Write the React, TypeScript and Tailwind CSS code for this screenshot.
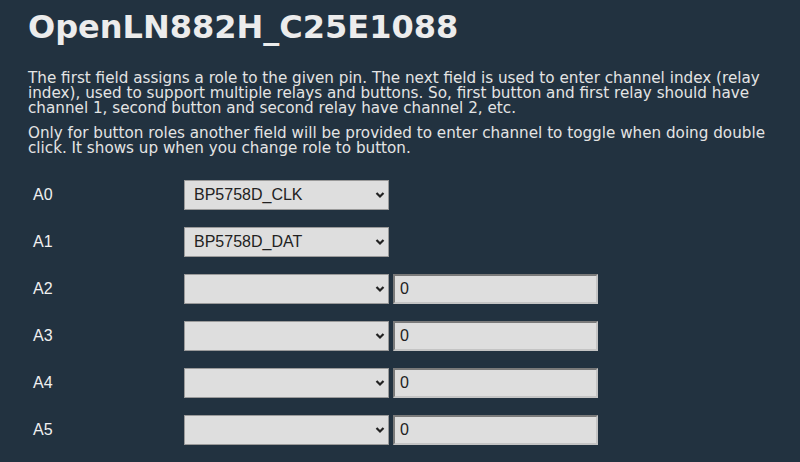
import React from "react";

type Pin = {
  name: string;
  role: string;
  channel?: string;
};

const pins: Pin[] = [
  { name: "A0", role: "BP5758D_CLK" },
  { name: "A1", role: "BP5758D_DAT" },
  { name: "A2", role: "", channel: "0" },
  { name: "A3", role: "", channel: "0" },
  { name: "A4", role: "", channel: "0" },
  { name: "A5", role: "", channel: "0" },
];

const Chevron = () => (
  <svg
    className="pointer-events-none absolute right-[4px] top-1/2 -translate-y-1/2"
    width="10"
    height="7"
    viewBox="0 0 10 7"
  >
    <path d="M1.5 1.5 L5 5 L8.5 1.5" fill="none" stroke="#222" strokeWidth="2.2" />
  </svg>
);

const PinRow: React.FC<{ pin: Pin }> = ({ pin }) => (
  <div className="flex h-[47px] items-center">
    <div className="w-[156px] pl-[5px] font-['Liberation_Sans',Arial,sans-serif] text-[16px] text-[#f0f0f0]">
      {pin.name}
    </div>
    <div className="relative">
      <select
        defaultValue={pin.role}
        className="h-[30px] w-[205px] appearance-none border border-[#9a9a9a] bg-[#dedede] pl-[9px] font-['Liberation_Sans',Arial,sans-serif] text-[16px] text-[#222] outline-none"
      >
        <option value="">{""}</option>
        <option value="BP5758D_CLK">BP5758D_CLK</option>
        <option value="BP5758D_DAT">BP5758D_DAT</option>
      </select>
      <Chevron />
    </div>
    {pin.channel !== undefined && (
      <input
        defaultValue={pin.channel}
        className="ml-[4px] h-[30px] w-[205px] border-2 border-t-[#7a7a7a] border-l-[#7a7a7a] border-r-[#c4c4c4] border-b-[#c4c4c4] bg-[#dedede] pl-[5px] font-['Liberation_Sans',Arial,sans-serif] text-[16px] text-[#222] outline-none"
      />
    )}
  </div>
);

export default function App() {
  return (
    <div className="min-h-[462px] w-full overflow-hidden bg-[#223240] pl-[28px] pt-[11px] text-[#e4e4e4]">
      <h1 className="font-['DejaVu_Sans',Verdana,sans-serif] text-[32px] font-bold leading-none text-[#ececec]">
        OpenLN882H_C25E1088
      </h1>
      <p className="mt-[28px] pr-[2px] font-['DejaVu_Sans',Verdana,sans-serif] text-[15.2px] leading-[15px]">
        The first field assigns a role to the given pin. The next field is used to enter channel index (relay
        index), used to support multiple relays and buttons. So, first button and first relay should have
        channel 1, second button and second relay have channel 2, etc.
      </p>
      <p className="mt-[10px] pr-[2px] font-['DejaVu_Sans',Verdana,sans-serif] text-[15.2px] leading-[15px]">
        Only for button roles another field will be provided to enter channel to toggle when doing double
        click. It shows up when you change role to button.
      </p>
      <div className="mt-[15px]">
        {pins.map((pin) => (
          <PinRow key={pin.name} pin={pin} />
        ))}
      </div>
    </div>
  );
}
